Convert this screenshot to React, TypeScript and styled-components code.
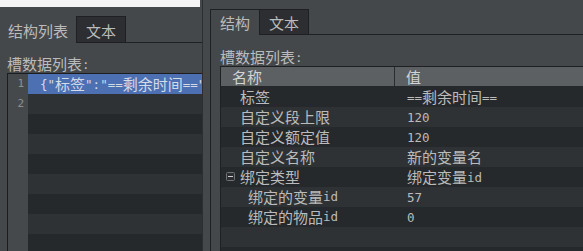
import React from "react";
import styled, { createGlobalStyle, css } from "styled-components";

const GlobalStyle = createGlobalStyle`
  html, body {
    margin: 0;
    padding: 0;
    height: 100%;
    overflow: hidden;
    background: #45484b;
  }
  body {
    font-family: "Noto Sans CJK SC", "DejaVu Sans", sans-serif;
    font-size: 15px;
    color: #bbbbbb;
  }
`;

const CJK = /[\u3000-\u9fff\uff00-\uffef]/;
const RUNS = /[\u3000-\u9fff\uff00-\uffef]+|[^\u3000-\u9fff\uff00-\uffef]+/g;

// latin runs are set in a narrower mono face, CJK stays at full size
function Txt({ children }: { children: string }) {
  const runs = children.match(RUNS) ?? [];
  return (
    <>
      {runs.map((run, i) =>
        CJK.test(run) ? <span key={i}>{run}</span> : <Latin key={i}>{run}</Latin>
      )}
    </>
  );
}

interface Slot {
  name: string;
  value: string;
  depth: number;
  expanded?: boolean;
}

const slots: Slot[] = [
  { name: "标签", value: "==剩余时间==", depth: 1 },
  { name: "自定义段上限", value: "120", depth: 1 },
  { name: "自定义额定值", value: "120", depth: 1 },
  { name: "自定义名称", value: "新的变量名", depth: 1 },
  { name: "绑定类型", value: "绑定变量id", depth: 1, expanded: true },
  { name: "绑定的变量id", value: "57", depth: 2 },
  { name: "绑定的物品id", value: "0", depth: 2 },
];

const editorLines = ['{"标签":"==剩余时间=="', ""];

function ExpandIcon() {
  return (
    <ExpandMark width="9" height="9" viewBox="0 0 9 9">
      <rect x="0.5" y="0.5" width="8" height="8" rx="1" fill="#2c2e31" stroke="#6f7275" />
      <line x1="2" y1="4.5" x2="7" y2="4.5" stroke="#d0d0d0" />
    </ExpandMark>
  );
}

export default function App() {
  const editorFill = Array.from({ length: 9 }, (_, i) => i);
  const tableFill = Array.from({ length: 2 }, (_, i) => i);
  return (
    <>
      <GlobalStyle />
      <Desktop>
        <LeftWindow>
          <TitleStrip />
          <TabBar $gap={9}>
            <Tab $active $width={76} $bordered={false}>
              结构列表
            </Tab>
            <Tab $width={50}>文本</Tab>
            <TabRule />
          </TabBar>
          <FieldLabel $top={12} $left={7}>
            <Txt>槽数据列表:</Txt>
          </FieldLabel>
          <Editor>
            <Gutter>
              {editorLines.map((_, i) => (
                <LineNo key={i}>{i + 1}</LineNo>
              ))}
            </Gutter>
            <Lines>
              {editorFill.map((i) => (
                <CodeLine key={i} $index={i} $selected={i === 0}>
                  {editorLines[i] ? <Txt>{editorLines[i]}</Txt> : null}
                </CodeLine>
              ))}
            </Lines>
          </Editor>
        </LeftWindow>

        <RightWindow>
          <TabBar $gap={0}>
            <Tab $active $width={50}>
              结构
            </Tab>
            <Tab $width={49} $joined>
              文本
            </Tab>
            <TabRule />
          </TabBar>
          <PaneBody>
            <FieldLabel $top={13} $left={0}>
              <Txt>槽数据列表:</Txt>
            </FieldLabel>
            <Table>
              <HeaderRow>
                <HeadCell $width={174}>名称</HeadCell>
                <HeadCell>值</HeadCell>
              </HeaderRow>
              {slots.map((slot, i) => (
                <Row key={slot.name} $index={i}>
                  <NameCell $depth={slot.depth}>
                    {slot.expanded ? <ExpandIcon /> : null}
                    <Txt>{slot.name}</Txt>
                  </NameCell>
                  <ValueCell>
                    <Txt>{slot.value}</Txt>
                  </ValueCell>
                </Row>
              ))}
              {tableFill.map((i) => (
                <Row key={`fill-${i}`} $index={slots.length + i} />
              ))}
            </Table>
          </PaneBody>
        </RightWindow>
      </Desktop>
    </>
  );
}

const stripe = (index: number) => (index % 2 === 1 ? "#2f3234" : "#26292b");

const Latin = styled.span`
  font-family: "DejaVu Sans Mono", "Liberation Mono", monospace;
  font-size: 12.5px;
  vertical-align: 1px;
`;

const Desktop = styled.div`
  display: flex;
  height: 251px;
  width: 583px;
  overflow: hidden;
`;

const LeftWindow = styled.div`
  width: 202px;
  flex: none;
  display: flex;
  flex-direction: column;
  overflow: hidden;
  background: #45484b;
`;

const TitleStrip = styled.div`
  height: 7px;
  background: #f4f4f4;
  margin-right: 2px;
`;

const TabBar = styled.div<{ $gap: number }>`
  display: flex;
  align-items: stretch;
  margin-top: ${(p) => p.$gap}px;
  height: 27px;
  flex: none;
`;

const Tab = styled.div<{
  $active?: boolean;
  $width: number;
  $bordered?: boolean;
  $joined?: boolean;
}>`
  width: ${(p) => p.$width}px;
  box-sizing: border-box;
  padding-left: 9px;
  line-height: 27px;
  white-space: nowrap;
  color: #bbbbbb;
  border: 1px solid #1f2022;
  ${(p) => (p.$joined ? "border-left: none;" : "")}
  ${(p) =>
    p.$active
      ? css`
          background: #45484b;
          border-bottom: none;
        `
      : css`
          background: #2c2e31;
          border-bottom: 1px solid #1f2022;
        `}
  ${(p) =>
    p.$bordered === false
      ? css`
          border-color: transparent;
          padding-left: 7px;
        `
      : null}
`;

const TabRule = styled.div`
  flex: 1;
  border-bottom: 1px solid #1f2022;
`;

const FieldLabel = styled.div<{ $top: number; $left: number }>`
  margin-top: ${(p) => p.$top}px;
  padding-left: ${(p) => p.$left}px;
  height: 18px;
  line-height: 18px;
  white-space: nowrap;
  flex: none;
`;

const Editor = styled.div`
  flex: 1;
  display: flex;
  margin-left: 7px;
  border-top: 1px solid #1c1d1f;
  border-left: 1px solid #1c1d1f;
  overflow: hidden;
`;

const Gutter = styled.div`
  width: 20px;
  flex: none;
  background: #46494c;
`;

const LineNo = styled.div`
  height: 20px;
  line-height: 20px;
  padding-right: 4px;
  text-align: right;
  font-family: "DejaVu Sans Mono", monospace;
  font-size: 11px;
  color: #8c8f92;
`;

const Lines = styled.div`
  flex: 1;
  min-width: 0;
`;

const CodeLine = styled.div<{ $index: number; $selected?: boolean }>`
  height: 20px;
  line-height: 20px;
  padding-left: 12px;
  white-space: nowrap;
  overflow: hidden;
  background: ${(p) => (p.$selected ? "#4d70b3" : stripe(p.$index))};
  color: ${(p) => (p.$selected ? "#d4dbe8" : "#bbbbbb")};
`;

const RightWindow = styled.div`
  flex: 1;
  min-width: 0;
  display: flex;
  flex-direction: column;
  border-left: 1px solid #2c2e30;
  padding-left: 7px;
  background: #45484b;
  & > ${TabBar} {
    margin-top: 9px;
    height: 26px;
  }
  & > ${TabBar} > ${Tab} {
    line-height: 26px;
  }
`;

const PaneBody = styled.div`
  flex: 1;
  display: flex;
  flex-direction: column;
  border-left: 1px solid #1f2022;
  padding-left: 9px;
  min-height: 0;
`;

const Table = styled.div`
  flex: 1;
  border-top: 1px solid #1f2022;
  border-left: 1px solid #1f2022;
  overflow: hidden;
`;

const HeaderRow = styled.div`
  display: flex;
  height: 19px;
  background: #5c6063;
  border-bottom: 1px solid #25282a;
`;

const HeadCell = styled.div<{ $width?: number }>`
  ${(p) => (p.$width ? `width: ${p.$width}px; flex: none;` : "flex: 1;")}
  box-sizing: border-box;
  padding-left: 11px;
  line-height: 19px;
  color: #d2d4d6;
  border-right: ${(p) => (p.$width ? "1px solid #2a2c2e" : "none")};
`;

const Row = styled.div<{ $index: number }>`
  display: flex;
  height: 20px;
  line-height: 20px;
  white-space: nowrap;
  background: ${(p) => stripe(p.$index)};
`;

const NameCell = styled.div<{ $depth: number }>`
  width: 174px;
  flex: none;
  display: flex;
  align-items: center;
  box-sizing: border-box;
  padding-left: ${(p) => 11 + p.$depth * 8}px;
  position: relative;
`;

const ExpandMark = styled.svg`
  position: absolute;
  left: 5px;
  top: 5px;
`;

const ValueCell = styled.div`
  flex: 1;
  padding-left: 12px;
`;
